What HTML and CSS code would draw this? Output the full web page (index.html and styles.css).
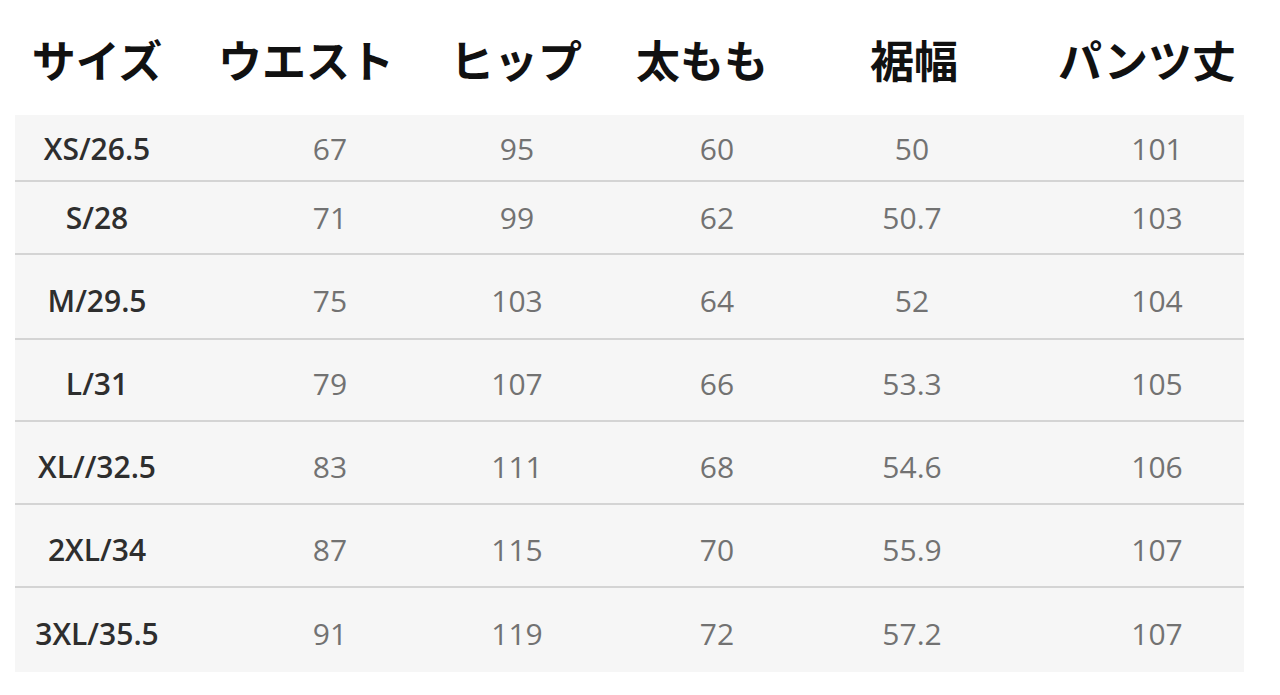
FILE: index.html
```html
<!DOCTYPE html>
<html lang="ja">
<head>
<meta charset="utf-8">
<title>サイズ表</title>
<link rel="stylesheet" href="styles.css">
</head>
<body>
<div class="chart">
  <div class="head">
    <div class="hc">サイズ</div>
    <div class="hc">ウエスト</div>
    <div class="hc">ヒップ</div>
    <div class="hc">太もも</div>
    <div class="hc">裾幅</div>
    <div class="hc">パンツ丈</div>
  </div>
  <div class="body">
    <div class="row"><div class="c size">XS/26.5</div><div class="c">67</div><div class="c">95</div><div class="c">60</div><div class="c">50</div><div class="c">101</div></div>
    <div class="row"><div class="c size">S/28</div><div class="c">71</div><div class="c">99</div><div class="c">62</div><div class="c">50.7</div><div class="c">103</div></div>
    <div class="row"><div class="c size">M/29.5</div><div class="c">75</div><div class="c">103</div><div class="c">64</div><div class="c">52</div><div class="c">104</div></div>
    <div class="row"><div class="c size">L/31</div><div class="c">79</div><div class="c">107</div><div class="c">66</div><div class="c">53.3</div><div class="c">105</div></div>
    <div class="row"><div class="c size">XL//32.5</div><div class="c">83</div><div class="c">111</div><div class="c">68</div><div class="c">54.6</div><div class="c">106</div></div>
    <div class="row"><div class="c size">2XL/34</div><div class="c">87</div><div class="c">115</div><div class="c">70</div><div class="c">55.9</div><div class="c">107</div></div>
    <div class="row"><div class="c size">3XL/35.5</div><div class="c">91</div><div class="c">119</div><div class="c">72</div><div class="c">57.2</div><div class="c">107</div></div>
  </div>
</div>
</body>
</html>
```
FILE: styles.css
```css
* { box-sizing: border-box; }
html, body { margin: 0; padding: 0; background: #ffffff; }
body { width: 1280px; height: 695px; overflow: hidden; }

.chart { width: 1280px; }

.head {
  display: grid;
  grid-template-columns: 209px 210px 186px 212px 233px 1fr;
  height: 115px;
  padding: 2px 0 0 2px;
  align-items: center;
}
.hc {
  width: 190px;
  text-align: center;
  white-space: nowrap;
  font-family: "Noto Sans CJK JP", sans-serif;
  font-weight: 700;
  font-size: 44px;
  line-height: 1;
  color: #111111;
}

.body {
  margin-left: 15px;
  width: 1229px;
  background: #f6f6f6;
}
.row {
  display: grid;
  grid-template-columns: 233px 187px 200px 195px 245px 1fr;
  padding-left: 7px;
  align-items: center;
  border-bottom: 2px solid #d4d4d4;
}
.row:last-child { border-bottom: none; }
.row:nth-child(1) { height: 67px; padding-top: 2px; }
.row:nth-child(2) { height: 73px; }
.row:nth-child(3) { height: 85px; padding-top: 8px; }
.row:nth-child(4) { height: 82px; padding-top: 8px; }
.row:nth-child(5) { height: 83px; padding-top: 9px; }
.row:nth-child(6) { height: 83px; padding-top: 9px; }
.row:nth-child(7) { height: 84px; padding-top: 8px; }

.c {
  width: 150px;
  text-align: center;
  white-space: nowrap;
  font-family: "Open Sans", sans-serif;
  font-size: 30px;
  line-height: 1;
  color: #727272;
}
.c.size {
  color: #2e2e2e;
  font-weight: 600;
}
```
